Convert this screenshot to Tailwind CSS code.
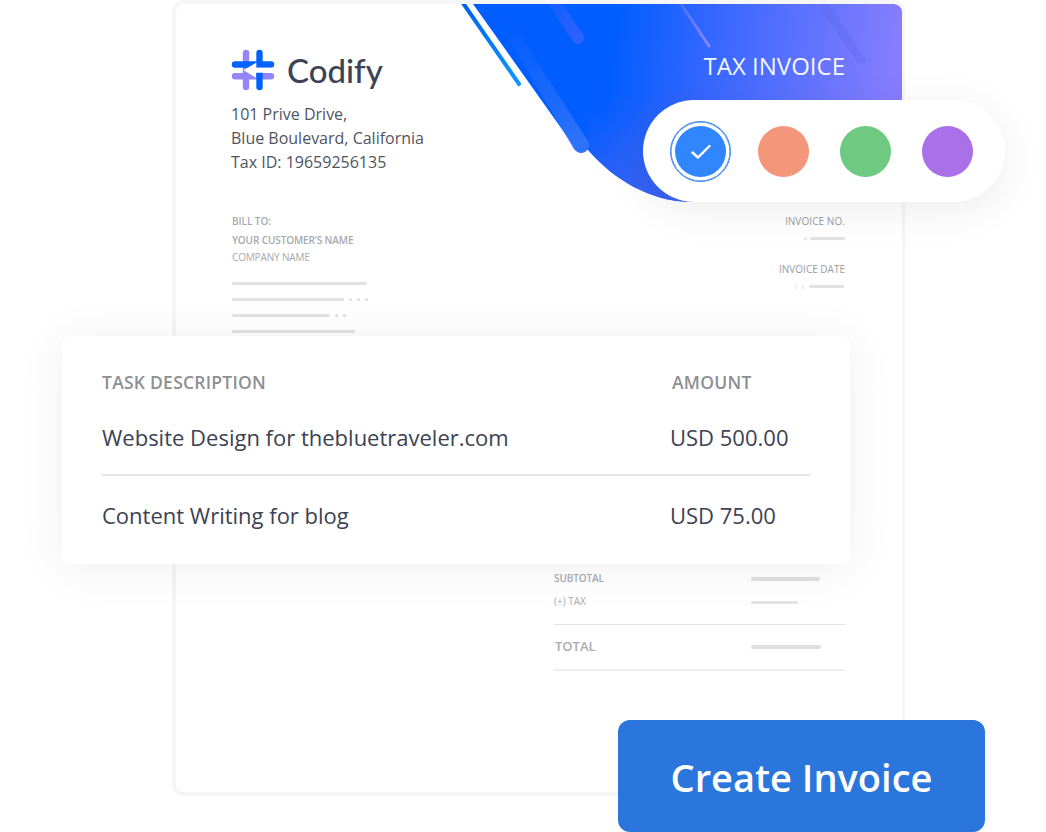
<!DOCTYPE html>
<html lang="en">
<head>
<meta charset="utf-8">
<title>Tax Invoice</title>
<script src="https://cdn.jsdelivr.net/npm/@tailwindcss/browser@4"></script>
</head>
<body class="bg-white">
<main class="relative h-[832px] w-[1046px] overflow-hidden bg-white font-['Open_Sans',sans-serif]">
  <!-- Invoice sheet -->
  <article class="relative ml-[172px] h-[796px] w-[733px] overflow-hidden rounded-xl border-4 border-r-3 border-[#f6f6f6] bg-white">
    <svg class="absolute top-0 left-0" width="726" height="200" viewBox="176 4 726 200" fill="none">
      <defs>
        <linearGradient id="bg" gradientUnits="userSpaceOnUse" x1="610" y1="50" x2="890" y2="90">
          <stop stop-color="#005dff"/><stop offset=".38" stop-color="#3a68ff"/><stop offset="1" stop-color="#857dff"/>
        </linearGradient>
        <linearGradient id="low" gradientUnits="userSpaceOnUse" x1="650" y1="90" x2="675" y2="205">
          <stop stop-color="#3a62f2" stop-opacity="0"/><stop offset="1" stop-color="#3a62f2"/>
        </linearGradient>
        <linearGradient id="band" gradientUnits="userSpaceOnUse" x1="505" y1="20" x2="585" y2="145">
          <stop stop-color="#2b6dfc" stop-opacity="0"/><stop offset="1" stop-color="#2f73fb"/>
        </linearGradient>
        <linearGradient id="line" gradientUnits="userSpaceOnUse" x1="462" y1="4" x2="520" y2="84">
          <stop stop-color="#0062ee"/><stop offset="1" stop-color="#0c97ff"/>
        </linearGradient>
        <linearGradient id="s1" gradientUnits="userSpaceOnUse" x1="545" y1="0" x2="578" y2="40">
          <stop stop-color="#2f62ff" stop-opacity=".3"/><stop offset="1" stop-color="#2f62ff"/>
        </linearGradient>
        <linearGradient id="s2" gradientUnits="userSpaceOnUse" x1="680" y1="0" x2="710" y2="46">
          <stop stop-color="#8d86ff" stop-opacity=".3"/><stop offset="1" stop-color="#8d86ff"/>
        </linearGradient>
      </defs>
      <path d="M473 4H902V202H690C650 201 614 180 588 150L576 149Z" fill="url(#bg)"/>
      <path d="M588 90H700V202H690C650 201 614 180 588 150Z" fill="url(#low)"/>
      <path d="M489 7L574 149Q579 155 585 152Q591 148 588 141L500 4Z" fill="url(#band)"/>
      <path d="M463 3L519 84" stroke="url(#line)" stroke-width="4" stroke-linecap="round"/>
      <path d="M550 -4L578 38" stroke="url(#s1)" stroke-width="12" stroke-linecap="round"/>
      <path d="M681 4L709 46" stroke="url(#s2)" stroke-width="3" stroke-linecap="round"/>
      <path d="M820 0L861 60" stroke="#5c66ef" stroke-opacity=".35" stroke-width="9" stroke-linecap="round"/>
    </svg>

    <header class="relative flex justify-between pr-[57px] pl-[55px]">
      <div class="pt-[45px]">
        <div class="flex h-[42px] items-center">
          <svg width="44" height="42" viewBox="231 49 44 42" fill="none" stroke-width="6.400" stroke-linecap="round">
            <path d="M246 53V87M235 76.200H271" stroke="#9585fc"/>
            <path d="M259.500 53V64.500M235 64.500H271" stroke="#0062ff"/>
            <path d="M243.500 70.300L256.300 62.500V67.700H274V73H256.300V78Z" fill="#fff"/>
            <path d="M256.300 72.800H262.700V87A3.200 3.200 0 0 1 256.300 87Z" fill="#0062ff"/>
          </svg>
          <span class="ml-[12px] text-[33px] leading-[40px] font-medium text-[#3c4356] font-['Lato',sans-serif]">Codify</span>
        </div>
        <p class="mt-[11px] text-[16px] leading-6 text-[#50545f]">101 Prive Drive,<br>Blue Boulevard, California<br>Tax ID: 19659256135</p>
      </div>
      <h1 class="pt-[45px] text-[24px] leading-[34px] font-normal text-white/95">TAX INVOICE</h1>
    </header>

    <section class="relative mt-[37px] flex justify-between pr-[57px] pl-[56px] text-[10px] text-[#a6a9ae]">
      <div>
        <p class="mt-[3px] leading-[15px] font-semibold tracking-[-0.05px]">BILL TO:</p>
        <p class="mt-[4px] leading-[15px] font-semibold tracking-[-0.1px]">YOUR CUSTOMER’S NAME</p>
        <p class="mt-[2px] leading-[15px] tracking-[-0.150px]">COMPANY NAME</p>
        <div class="mt-[17px] flex flex-col gap-[13px]">
          <div class="h-[3px] w-[135px] rounded-full bg-[#e2e2e2]"></div>
          <div class="flex gap-[5px]"><i class="h-[3px] w-[112px] rounded-full bg-[#e2e2e2]"></i><i class="size-[3px] rounded-full bg-[#dedede]"></i><i class="size-[3px] rounded-full bg-[#dedede]"></i><i class="size-[3px] rounded-full bg-[#dedede]"></i></div>
          <div class="flex gap-[5px]"><i class="h-[3px] w-[98px] rounded-full bg-[#e2e2e2]"></i><i class="size-[3px] rounded-full bg-[#dedede]"></i><i class="size-[3px] rounded-full bg-[#dedede]"></i></div>
          <div class="h-[3px] w-[123px] rounded-full bg-[#e2e2e2]"></div>
        </div>
      </div>
      <div class="flex flex-col items-end font-medium text-[#989ba1]">
        <p class="mt-[3px] leading-[15px] tracking-[0.080px]">INVOICE NO.</p>
        <div class="mt-[8px] flex gap-[3px]"><i class="size-[3px] rounded-full bg-[#e4e4e4]"></i><i class="h-[3px] w-[35px] rounded-full bg-[#e2e2e2]"></i></div>
        <p class="mt-[22px] leading-[15px]">INVOICE DATE</p>
        <div class="mt-[8px] mr-[1px] flex gap-[4px]"><i class="h-[4px] w-[2px] bg-[#ececec]"></i><i class="mr-[1px] ml-[1px] h-[4px] w-[2px] bg-[#ececec]"></i><i class="h-[3px] w-[35px] rounded-full bg-[#e2e2e2]"></i></div>
      </div>
    </section>

    <section class="mt-[238px] ml-[378px] w-[291px] text-[#a9acb1]">
      <div class="flex h-[15px] items-center justify-between pr-[25px] text-[10px] font-semibold tracking-[-0.1px]"><span>SUBTOTAL</span><i class="h-[4px] w-[69px] rounded-sm bg-[#e0e0e0]"></i></div>
      <div class="mt-[7px] flex h-[16px] items-center justify-between pr-[47px] text-[10px] font-medium"><span>(+) TAX</span><i class="mt-[3px] h-[3px] w-[47px] rounded-sm bg-[#e5e5e5]"></i></div>
      <div class="mt-[15px] flex h-[47px] items-center justify-between border-t border-b-2 border-t-[#e2e2e2] border-b-[#eeeeee] pr-[24px] pb-px text-[13px] font-semibold"><span class="pl-px">TOTAL</span><i class="h-[4px] w-[70px] rounded-sm bg-[#dedede]"></i></div>
    </section>
  </article>

  <!-- Theme colour picker -->
  <div class="absolute top-[100px] left-[643px] flex h-[102px] w-[362px] items-center rounded-full bg-white pt-px pl-[27px] shadow-[0_8px_42px_rgba(0,0,0,0.08)]">
    <button class="flex size-[61px] items-center justify-center rounded-full border-[1.500px] border-[#2f80f0] shadow-[inset_0_0_0_0.5px_#2f80f0]" aria-label="Blue">
      <span class="flex size-[51px] items-center justify-center rounded-full bg-[#2f86fd]">
        <svg width="22" height="18" viewBox="0 0 22 18" fill="none" stroke="#fff" stroke-width="2.400" stroke-linecap="round" stroke-linejoin="round"><path d="M2.500 9.500L8 14.500L19.500 3"/></svg>
      </span>
    </button>
    <button class="ml-[27px] size-[51px] rounded-full bg-[#f49679]" aria-label="Coral"></button>
    <button class="ml-[31px] size-[51px] rounded-full bg-[#6eca80]" aria-label="Green"></button>
    <button class="ml-[31px] size-[51px] rounded-full bg-[#a970e8]" aria-label="Purple"></button>
  </div>

  <!-- Task list -->
  <section class="absolute top-[336px] left-[62px] h-[228px] w-[788px] rounded-lg bg-white pt-[32px] pr-[40px] pl-[40px] shadow-[0_4px_48px_rgba(0,0,0,0.07)]">
    <div class="grid h-[28px] grid-cols-[570px_1fr] items-center text-[17.500px] font-semibold tracking-[0.250px] text-[#8e8f92]"><span>TASK DESCRIPTION</span><span>AMOUNT</span></div>
    <div class="mt-[12px] grid h-[68px] grid-cols-[568px_1fr] items-center border-b-2 border-[#e6e6e7] pb-[7px] text-[22px] text-[#3c4253]"><span>Website Design for thebluetraveler.com</span><span>USD 500.00</span></div>
    <div class="grid h-[78px] grid-cols-[568px_1fr] items-center text-[22px] text-[#3c4253]"><span>Content Writing for blog</span><span>USD 75.00</span></div>
  </section>

  <button class="absolute top-[720px] left-[618px] flex h-[112px] w-[367px] items-center justify-center rounded-xl bg-[#2b76dd] pt-[3px] text-[38px] font-semibold text-white">Create Invoice</button>
</main>
</body>
</html>
